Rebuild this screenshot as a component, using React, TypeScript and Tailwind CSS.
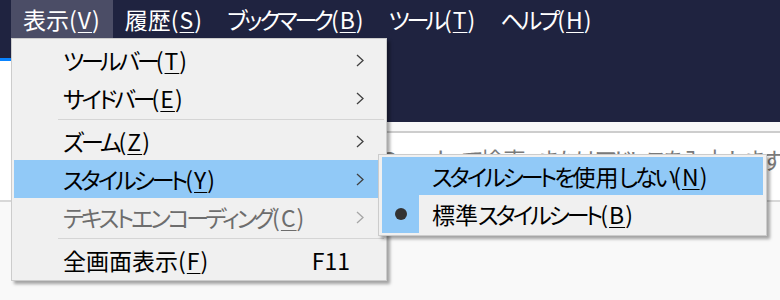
import React from "react";

const font = "font-['Yu_Gothic_UI','Noto_Sans_CJK_JP',sans-serif] [font-feature-settings:'palt']";

type Item =
  | { kind: "sep" }
  | { kind: "item"; label: string; key: string; sub?: boolean; disabled?: boolean; active?: boolean; accel?: string };

const mainItems: Item[] = [
  { kind: "item", label: "ツールバー", key: "T", sub: true },
  { kind: "item", label: "サイドバー", key: "E", sub: true },
  { kind: "sep" },
  { kind: "item", label: "ズーム", key: "Z", sub: true },
  { kind: "item", label: "スタイルシート", key: "Y", sub: true, active: true },
  { kind: "item", label: "テキストエンコーディング", key: "C", sub: true, disabled: true },
  { kind: "sep" },
  { kind: "item", label: "全画面表示", key: "F", accel: "F11" },
];

const menubar = [
  { label: "表示", key: "V", open: true },
  { label: "履歴", key: "S" },
  { label: "ブックマーク", key: "B" },
  { label: "ツール", key: "T" },
  { label: "ヘルプ", key: "H" },
];

const Chevron = ({ disabled }: { disabled?: boolean }) => (
  <svg width="8" height="13" viewBox="0 0 8 13" fill="none">
    <path d="M1 1l6 5.5L1 12" stroke={disabled ? "#a6a6a6" : "#404040"} strokeWidth="1.3" />
  </svg>
);

const Jp = ({ text }: { text: string }) => {
  const parts = text.split(/(ー|[\u3040-\u30fb\u30fd-\u30ff]+)/).filter(Boolean);
  return (
    <>
      {parts.map((p, i) =>
        p === "ー" ? (
          <span key={i} className="tracking-[-4px]">{p}</span>
        ) : /[\u3040-\u30ff]/.test(p) ? (
          <span key={i} className="tracking-[-3px]">{p}</span>
        ) : (
          <span key={i}>{p}</span>
        )
      )}
    </>
  );
};

const Label = ({ label, k }: { label: string; k: string }) => (
  <span className="whitespace-nowrap">
    <Jp text={label} />
    <span className="tracking-[1px]">
      (<span className="underline underline-offset-[3px] decoration-1">{k}</span>)
    </span>
  </span>
);

export default function App() {
  return (
    <div className={`relative w-[780px] h-[300px] overflow-hidden bg-[#f9f9f9] ${font}`}>
      {/* menubar */}
      <div className="h-[38px] bg-[#1f2340] flex pl-[11px] text-white text-[23px]">
        {menubar.map((m) => (
          <div key={m.label} className={`px-[12px] flex items-center ${m.open ? "bg-[#4b4d66]" : ""}`}>
            <Label label={m.label} k={m.key} />
          </div>
        ))}
      </div>

      {/* tab strip */}
      <div className="h-[84px] bg-[#1f2340] flex items-end">
        <div className="w-[200px] h-[64px] bg-white border-t-[3px] border-[#0a84ff]" />
      </div>

      {/* toolbar */}
      <div className="h-[80px] flex bg-white border-b-2 border-[#d8d8d8]">
        <div className="w-[200px]" />
        <div className="flex-1 flex flex-col">
          <div className="h-[11px] bg-[#f9f9f9] border-b-2 border-[#cdcdcd]" />
          <div className="pl-[215px] pt-[11px] text-[23px] leading-[30px] text-[#7a7a7a] whitespace-nowrap">
            <Jp text="Google で検索、またはアドレスを入力します" />
          </div>
        </div>
      </div>

      {/* main dropdown */}
      <div className="absolute left-[11px] top-[38px] w-[376px] border border-[#cccccc] bg-[#f0f0f0] px-[2px] pt-[2px] pb-[1px] text-[23px] shadow-[3px_3px_3px_rgba(0,0,0,0.35)]">
        {mainItems.map((it, i) =>
          it.kind === "sep" ? (
            <div key={i} className="flex my-[2px]">
              <div className="w-[44px]" />
              <div className="flex-1 h-px bg-[#d5d5d5]" />
            </div>
          ) : (
            <div
              key={i}
              className={`h-[38px] flex items-center ${it.active ? "bg-[#91c9f7]" : ""} ${
                it.disabled ? "text-[#6d6d6d]" : "text-black"
              }`}
            >
              <div className="w-[44px] h-full" />
              <div className="flex-1 h-full flex items-center pl-[5px] pr-[20px]">
                <div className="flex-1">
                  <Label label={it.label} k={it.key} />
                </div>
                {it.sub && <Chevron disabled={it.disabled} />}
                {it.accel && <span className="mr-[14px]">{it.accel}</span>}
              </div>
            </div>
          )
        )}
      </div>

      {/* submenu */}
      <div className="absolute left-[378px] top-[154px] w-[389px] border border-[#cccccc] bg-[#f0f0f0] px-[3px] py-[2px] text-[23px] text-black shadow-[3px_3px_3px_rgba(0,0,0,0.35)]">
        <div className="h-[38px] flex items-center bg-[#91c9f7]">
          <div className="w-[37px]" />
          <div className="pl-[13px]">
            <Label label="スタイルシートを使用しない" k="N" />
          </div>
        </div>
        <div className="h-[38px] flex items-center">
          <div className="w-[37px] h-full bg-[#91c9f7] flex items-center justify-center">
            <div className="w-[12px] h-[12px] rounded-full bg-[#333333]" />
          </div>
          <div className="pl-[13px]">
            <Label label="標準スタイルシート" k="B" />
          </div>
        </div>
      </div>
    </div>
  );
}
